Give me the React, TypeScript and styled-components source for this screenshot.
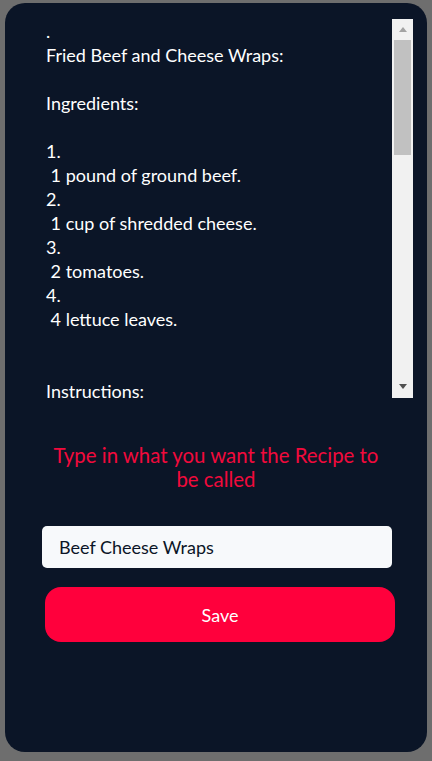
import React from "react";
import styled, { createGlobalStyle } from "styled-components";

const GlobalStyle = createGlobalStyle`
  html, body {
    margin: 0;
    padding: 0;
    background: #6e6e6e;
  }
  body {
    font-family: Lato, "Noto Sans", sans-serif;
  }
  * { box-sizing: border-box; }
`;

const Panel = styled.div`
  margin: 3px 5px 9px 5px;
  height: 749px;
  background: #0b1527;
  border-radius: 20px;
  display: flex;
  flex-direction: column;
  overflow: hidden;
`;

const ScrollArea = styled.div`
  margin: 16px 14px 0 37px;
  height: 379px;
  display: flex;
  flex-direction: row;
`;

const RecipeText = styled.div`
  flex: 1;
  overflow: hidden;
  padding-left: 4px;
  color: #ffffff;
  font-family: Lato, "Noto Sans", sans-serif;
  font-size: 18px;
  line-height: 24px;
  white-space: pre-wrap;
`;

const ScrollTrack = styled.div`
  width: 21px;
  background: #f1f1f1;
  display: flex;
  flex-direction: column;
`;

const ScrollButton = styled.div`
  height: 21px;
  display: flex;
  align-items: center;
  justify-content: center;
`;

const Arrow = styled.div<{ $dir: "up" | "down"; $color: string }>`
  width: 0;
  height: 0;
  border-left: 4.5px solid transparent;
  border-right: 4.5px solid transparent;
  ${(p) =>
    p.$dir === "up"
      ? `border-bottom: 5px solid ${p.$color}; margin-top: 0px;`
      : `border-top: 5px solid ${p.$color}; margin-top: -2px;`}
`;

const ThumbTrack = styled.div`
  flex: 1;
  padding: 0 2px;
`;

const Thumb = styled.div`
  height: 115px;
  background: #c1c1c1;
`;

const Heading = styled.h2`
  margin: 45px auto 0 auto;
  max-width: 340px;
  text-align: center;
  color: #f20a3c;
  font-family: Lato, "Noto Sans", sans-serif;
  font-weight: 400;
  font-size: 20.4px;
  line-height: 24px;
`;

const NameInput = styled.input`
  margin: 35px 35px 0 37px;
  height: 42px;
  border: none;
  outline: none;
  border-radius: 5px;
  background: #f7f9fb;
  padding: 0 0 0 17px;
  color: #0b1527;
  font-family: Lato, "Noto Sans", sans-serif;
  font-size: 18px;
`;

const SaveButton = styled.button`
  margin: 19px 32px 0 40px;
  height: 55px;
  border: none;
  border-radius: 16px;
  background: #ff003c;
  color: #ffffff;
  font-family: Lato, "Noto Sans", sans-serif;
  font-size: 18px;
  cursor: pointer;
`;

const recipe = `.
Fried Beef and Cheese Wraps:

Ingredients:

1.
 1 pound of ground beef.
2.
 1 cup of shredded cheese.
3.
 2 tomatoes.
4.
 4 lettuce leaves.


Instructions:

1.
 Cook the ground beef in a pan until browned.
2.
 Add the shredded cheese and stir until melted.
3.
 Slice the tomatoes.
4.
 Wrap the beef, cheese and tomatoes in the lettuce leaves.
5.
 Fry the wraps until crispy and serve.`;

export default function App() {
  return (
    <>
      <GlobalStyle />
      <Panel>
        <ScrollArea>
          <RecipeText>{recipe}</RecipeText>
          <ScrollTrack>
            <ScrollButton>
              <Arrow $dir="up" $color="#a3a3a3" />
            </ScrollButton>
            <ThumbTrack>
              <Thumb />
            </ThumbTrack>
            <ScrollButton>
              <Arrow $dir="down" $color="#505050" />
            </ScrollButton>
          </ScrollTrack>
        </ScrollArea>
        <Heading>Type in what you want the Recipe to be called</Heading>
        <NameInput defaultValue="Beef Cheese Wraps" />
        <SaveButton>Save</SaveButton>
      </Panel>
    </>
  );
}
